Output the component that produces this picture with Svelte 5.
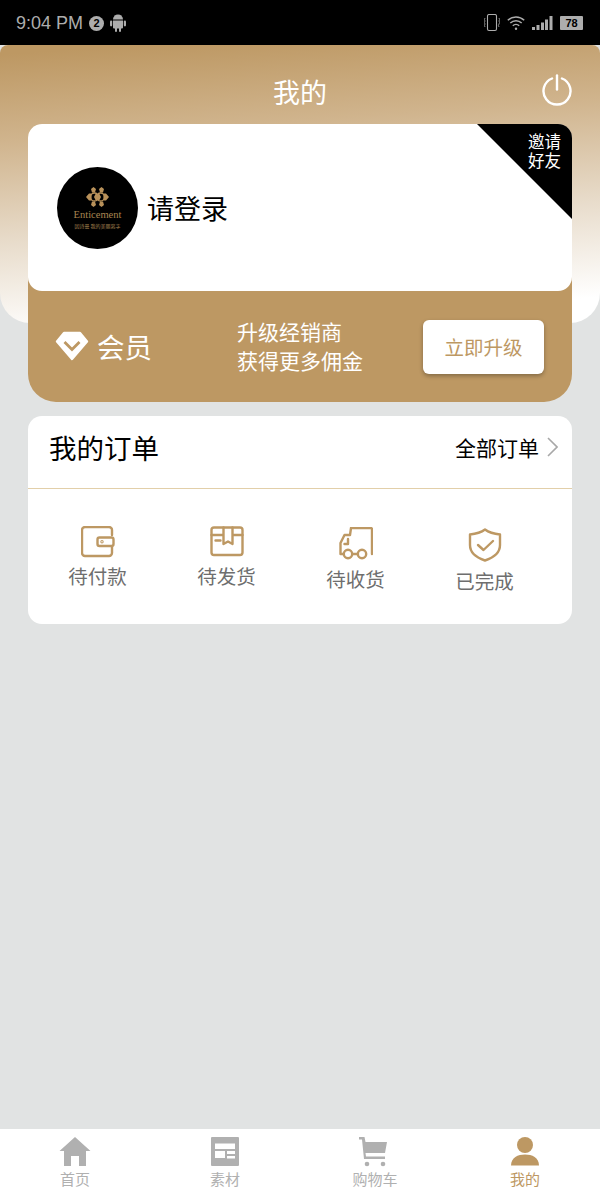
<script lang="ts">
    const orders = [
        { label: '待付款', icon: 'wallet', iconShift: 0, labelShift: 0 },
        { label: '待发货', icon: 'box', iconShift: 0, labelShift: 0 },
        { label: '待收货', icon: 'truck', iconShift: 1, labelShift: 2 },
        { label: '已完成', icon: 'shield', iconShift: 2, labelShift: 3 }
    ];
    const tabs = [
        { label: '首页', icon: 'home' },
        { label: '素材', icon: 'news' },
        { label: '购物车', icon: 'cart' },
        { label: '我的', icon: 'user', active: true }
    ];
</script>

<div class="page">
    <div class="status">
        <div class="status-left">
            <span class="time">9:04 PM</span>
            <span class="badge">2</span>
            <svg width="16" height="18" viewBox="0 0 16 18" fill="#adadad">
                <path d="M3 5.600a5 5 0 0 1 10 0z" />
                <path d="M4.800 1l1.200 2M11.200 1l-1.200 2" stroke="#adadad" stroke-width=".8" />
                <path d="M3 6.400h10v7.200a1 1 0 0 1-1 1h-1v2.400a1 1 0 0 1-2 0v-2.400H7v2.400a1 1 0 0 1-2 0v-2.400H4a1 1 0 0 1-1-1z" />
                <rect x="0" y="6.400" width="2.200" height="6" rx="1.100" />
                <rect x="13.800" y="6.400" width="2.200" height="6" rx="1.100" />
            </svg>
        </div>
        <div class="status-right">
            <svg width="16" height="18" viewBox="0 0 16 18" fill="none" stroke="#adadad">
                <rect x="3.500" y=".5" width="9" height="16" rx="1.500" stroke-width="1.100" />
                <path d="M1 4l-.6 1.500L1 7 .4 8.500 1 10l-.6 1.500L1 13M15 4l.6 1.500L15 7l.6 1.500L15 10l-.6 1.500L15 13" stroke-width=".8" />
            </svg>
            <svg width="18" height="16" viewBox="0 0 18 16" fill="none" stroke="#adadad" stroke-width="1.500">
                <path d="M.8 5.200a11.800 11.800 0 0 1 16.400 0M3.300 8a8.200 8.200 0 0 1 11.400 0M5.800 10.800a4.600 4.600 0 0 1 6.400 0" />
                <circle cx="9" cy="13.800" r="1.200" fill="#adadad" stroke="none" />
            </svg>
            <svg width="21" height="15" viewBox="0 0 21 15" fill="#adadad">
                <rect x="0" y="11" width="3" height="3" />
                <rect x="4.500" y="9" width="3" height="5" />
                <rect x="9" y="6.500" width="3" height="7.500" />
                <rect x="13" y="3.500" width="3" height="10.500" />
                <rect x="17.500" y="0" width="3" height="14" />
            </svg>
            <div class="battery"><span>78</span></div>
        </div>
    </div>

    <div class="hero">
        <div class="hero-title">我的</div>
        <svg class="power" width="32" height="32" viewBox="0 0 32 32" fill="none" stroke="#fff" stroke-width="2.400" stroke-linecap="round">
            <path d="M11 4.500a13.500 13.500 0 1 0 10 0" />
            <path d="M16 1.500v14" />
        </svg>
    </div>

    <div class="content">
        <div class="member-card">
            <div class="login">
                <div class="logo">
                    <svg width="23" height="20" viewBox="0 0 23 20" fill="#b8915a">
                        <path d="M7.500 0l2.500 2-1 3.500H6L5 2zM15.500 0l2.500 2-1 3.500h-3L13 2z" />
                        <path d="M7.500 20l2.500-2-1-3.500H6L5 18zM15.500 20l2.500-2-1-3.500h-3L13 18z" />
                        <path d="M0 10l3-3.500h2.500v7H3zM23 10l-3-3.500h-2.500v7H20zM9.500 7h4L15 10l-1.500 3h-4L8 10z" />
                        <circle cx="8.500" cy="10" r="4" fill="none" stroke="#b8915a" stroke-width="1.300" />
                        <circle cx="14.500" cy="10" r="4" fill="none" stroke="#b8915a" stroke-width="1.300" />
                    </svg>
                    <span class="logo-name">Enticement</span>
                    <span class="logo-sub">因诗曼 我的美丽离字</span>
                </div>
                <span class="login-text">请登录</span>
                <div class="invite"><span>邀请<br />好友</span></div>
            </div>
            <div class="upgrade">
                <div class="vip">
                    <svg width="34" height="30" viewBox="0 0 34 30">
                        <path d="M9 2h16l7 8.500L17 28 2 10.500z" fill="#fff" stroke="#fff" stroke-width="2.400" stroke-linejoin="round" />
                        <path d="M9.500 11L17 18.500 24.500 11" fill="none" stroke="#bd9863" stroke-width="2.800" />
                    </svg>
                    <span>会员</span>
                </div>
                <div class="pitch">升级经销商<br />获得更多佣金</div>
                <div class="upgrade-btn">立即升级</div>
            </div>
        </div>

        <div class="orders">
            <div class="orders-head">
                <span class="orders-title">我的订单</span>
                <span class="orders-all">
                    全部订单
                    <svg width="11" height="20" viewBox="0 0 11 20" fill="none" stroke="#a8a8a8" stroke-width="1.600">
                        <path d="M1 1l9 9-9 9" />
                    </svg>
                </span>
            </div>
            <div class="orders-row">
                {#each orders as o}
                    <div class="order" style="padding-top: {o.iconShift}px">
                        <svg width="34" height="34" viewBox="0 0 34 34" fill="none" stroke="#bd9863" stroke-width="2.400" stroke-linejoin="round" stroke-linecap="round">
                            {#if o.icon === 'wallet'}
                                <path d="M31 9V4a3 3 0 0 0-3-3H4a3 3 0 0 0-3 3v23a3 3 0 0 0 3 3h24a3 3 0 0 0 3-3v-6" />
                                <rect x="16.500" y="11.500" width="16" height="8.500" rx="2" />
                                <circle cx="21" cy="15.800" r=".5" />
                            {:else if o.icon === 'box'}
                                <rect x="1.500" y="1.500" width="31" height="27.500" rx="2.500" />
                                <path d="M1.500 9h12M22.500 9h10M13.500 1.500V18l4.500-2.500 4.500 2.500V1.500M5.500 14.500h5" />
                            {:else if o.icon === 'truck'}
                                <path d="M4.500 27H1.500V16l4-8H11l1-7h19.500a1.500 1.500 0 0 1 1.500 1.500V27" />
                                <path d="M9 12v5H5.500M13.500 27h5.500" />
                                <circle cx="9" cy="27" r="4.200" />
                                <circle cx="23" cy="27" r="4.200" />
                            {:else}
                                <path d="M17 1.500c4 3 10 4.500 15 5v10.500c0 7.500-6 12.500-15 15.500-9-3-15-8-15-15.500V6.500c5-.5 11-2 15-5z" />
                                <path d="M10 17l5.500 5L25 13" />
                            {/if}
                        </svg>
                        <span style="margin-top: {o.labelShift}px">{o.label}</span>
                    </div>
                {/each}
            </div>
        </div>
    </div>

    <div class="tabbar">
        {#each tabs as t}
            <div class="tab" class:active={t.active}>
                <svg width="32" height="30" viewBox="0 0 32 30" fill="currentColor">
                    {#if t.icon === 'home'}
                        <path d="M16 0L31.500 14H27v15h-7V19h-8v10H5V14H.5z" />
                    {:else if t.icon === 'news'}
                        <path fill-rule="evenodd" d="M3 0h26a1 1 0 0 1 1 1v27a1 1 0 0 1-1 1H3a1 1 0 0 1-1-1V1a1 1 0 0 1 1-1zM6 6.500V12h20V6.500zM6 14v7h10v-7zM18 14v3h8v-3zM18 19v2.500h8V19z" />
                    {:else if t.icon === 'cart'}
                        <path d="M0 0h5.500l1 5H28l-2 11H6.500l.5 3.500h19v2.500H5L3 2.500H0z" />
                        <circle cx="8" cy="27" r="2.300" />
                        <circle cx="24" cy="27" r="2.300" />
                    {:else}
                        <circle cx="16" cy="8" r="8" />
                        <path d="M2 28.500c0-8 7-11 14-11s14 3 14 11z" />
                    {/if}
                </svg>
                <span>{t.label}</span>
            </div>
        {/each}
    </div>
</div>

<style>
    :global(body) {
        margin: 0;
    }
    .page {
        position: relative;
        display: flex;
        flex-direction: column;
        height: 1190px;
        background: #e1e3e3;
        font-family: "Noto Sans CJK SC", "Noto Sans", sans-serif;
        overflow: hidden;
    }

    .status {
        display: flex;
        justify-content: space-between;
        align-items: center;
        height: 45px;
        padding: 1px 17px 0 16px;
        box-sizing: border-box;
        background: #000;
        color: #adadad;
        flex-shrink: 0;
    }
    .status-left, .status-right {
        display: flex;
        align-items: center;
    }
    .time {
        font-family: "Liberation Sans", sans-serif;
        font-size: 18px;
    }
    .badge {
        width: 15px;
        height: 15px;
        margin: 0 6px;
        border-radius: 50%;
        background: #adadad;
        color: #000;
        font: bold 11px/15px "Liberation Sans", sans-serif;
        text-align: center;
    }
    .status-right {
        gap: 7px;
    }
    .battery {
        width: 23px;
        height: 14px;
        background: #adadad;
        border-radius: 1px;
        color: #000;
        font: bold 11px/14px "Liberation Sans", sans-serif;
        text-align: center;
    }

    .hero {
        position: relative;
        height: 278px;
        flex-shrink: 0;
        border-radius: 8px 8px 30px 30px;
        background: linear-gradient(176deg, #bd9863 3%, #d0b48d 30%, #e8dccb 62%, #ffffff 92%);
    }
    .hero-title {
        padding-top: 29px;
        color: #fff;
        font-size: 27px;
        line-height: 36px;
        text-align: center;
    }
    .power {
        position: absolute;
        top: 29px;
        right: 27px;
    }

    .content {
        flex: 1;
        margin-top: -199px;
        padding: 0 28px;
        position: relative;
    }
    .member-card {
        height: 278px;
        border-radius: 14px 14px 28px 28px;
        background: #bd9863;
        display: flex;
        flex-direction: column;
    }
    .login {
        position: relative;
        height: 167px;
        flex-shrink: 0;
        display: flex;
        align-items: center;
        gap: 9px;
        padding-left: 29px;
        box-sizing: border-box;
        background: #fff;
        border-radius: 14px;
        overflow: hidden;
    }
    .logo {
        width: 81px;
        height: 82px;
        border-radius: 50%;
        background: #000;
        display: flex;
        flex-direction: column;
        align-items: center;
        justify-content: center;
        color: #a98550;
        line-height: 1;
        flex-shrink: 0;
    }
    .logo-name {
        margin-top: 3px;
        font-family: "Liberation Serif", serif;
        font-size: 10.5px;
    }
    .logo-sub {
        margin-top: 2px;
        font-size: 5px;
        white-space: nowrap;
    }
    .login-text {
        font-size: 27px;
        color: #000;
    }
    .invite {
        position: absolute;
        top: 0;
        right: 0;
        width: 95px;
        height: 95px;
        background: #000;
        clip-path: polygon(0 0, 100% 0, 100% 100%);
        color: #fff;
        font-size: 16.5px;
        line-height: 19px;
        text-align: right;
    }
    .invite span {
        position: absolute;
        top: 8px;
        right: 11px;
    }

    .upgrade {
        flex: 1;
        display: flex;
        align-items: center;
        color: #fff;
        padding-right: 28px;
    }
    .vip {
        display: flex;
        align-items: center;
        gap: 8px;
        width: 209px;
        margin-top: -2px;
        padding-left: 27px;
        box-sizing: border-box;
        font-size: 27.5px;
    }
    .pitch {
        flex: 1;
        margin-top: -2px;
        font-size: 21px;
        line-height: 29px;
    }
    .upgrade-btn {
        width: 121px;
        height: 54px;
        border-radius: 6px;
        background: #fff;
        color: #bd9863;
        font-size: 19.5px;
        line-height: 54px;
        text-align: center;
        box-shadow: 0 2px 4px rgba(0, 0, 0, .3);
    }

    .orders {
        margin-top: 14px;
        height: 208px;
        border-radius: 14px;
        background: #fff;
    }
    .orders-head {
        display: flex;
        justify-content: space-between;
        align-items: center;
        height: 73px;
        padding: 0 14px 10px 21px;
        box-sizing: border-box;
        border-bottom: 1px solid #e2cfa9;
        color: #000;
    }
    .orders-title {
        font-size: 27.5px;
    }
    .orders-all {
        display: flex;
        align-items: center;
        gap: 8px;
        font-size: 21px;
    }
    .orders-row {
        display: grid;
        grid-template-columns: repeat(4, 129px);
        padding: 37px 0 0 5px;
    }
    .order {
        display: flex;
        flex-direction: column;
        align-items: center;
        gap: 2px;
        color: #6e6e6e;
        font-size: 19.5px;
        line-height: 28px;
    }

    .tabbar {
        position: absolute;
        left: 0;
        right: 0;
        bottom: 0;
        height: 61px;
        display: grid;
        grid-template-columns: repeat(4, 1fr);
        background: #fff;
    }
    .tab {
        display: flex;
        flex-direction: column;
        align-items: center;
        padding-top: 8px;
        color: #b0b0b0;
        font-size: 15px;
        line-height: 20px;
    }
    .tab.active {
        color: #bd9863;
    }
    .tab span {
        margin-top: 2px;
    }
</style>
